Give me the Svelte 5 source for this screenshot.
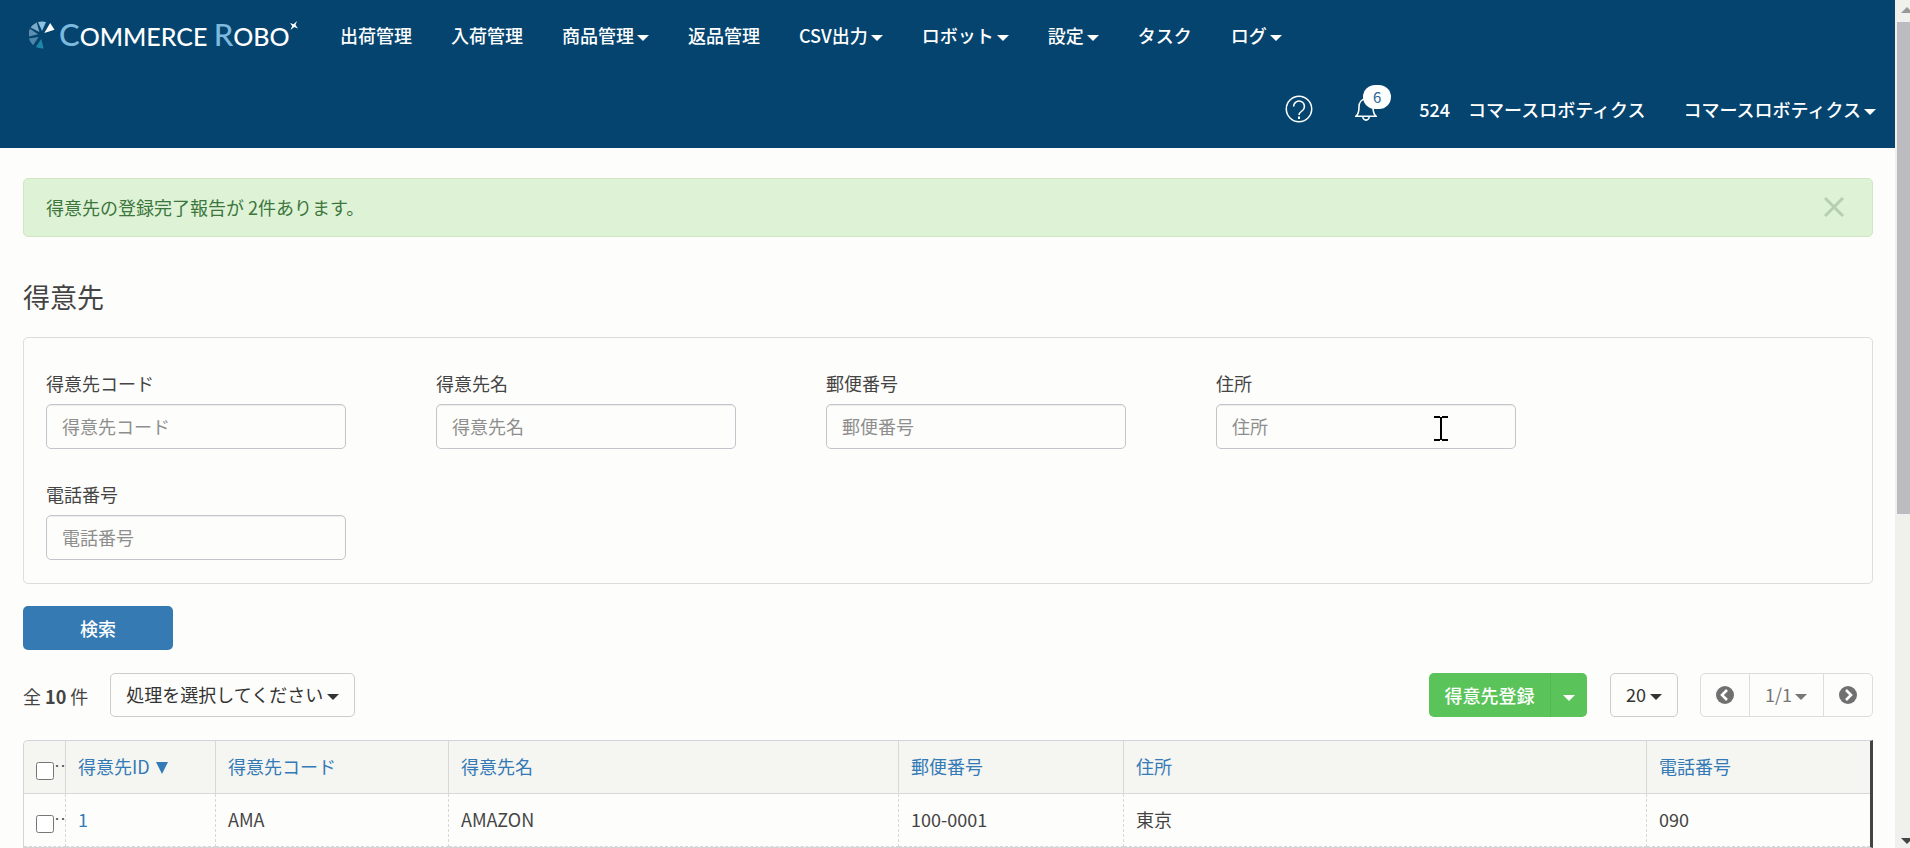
<script>
  const menu = [
    { label: '出荷管理' },
    { label: '入荷管理' },
    { label: '商品管理', caret: true },
    { label: '返品管理' },
    { label: 'CSV出力', caret: true },
    { label: 'ロボット', caret: true },
    { label: '設定', caret: true },
    { label: 'タスク' },
    { label: 'ログ', caret: true }
  ]

  const fields = [
    { id: 'code', label: '得意先コード' },
    { id: 'name', label: '得意先名' },
    { id: 'zip', label: '郵便番号' },
    { id: 'address', label: '住所', cursor: true },
    { id: 'tel', label: '電話番号' }
  ]

  const columns = ['得意先コード', '得意先名', '郵便番号', '住所', '電話番号']
  const rows = [
    { id: 1, code: 'AMA', name: 'AMAZON', zip: '100-0001', address: '東京', tel: '090' }
  ]

  const wedges = [
    { angle: 0, color: '#8fc1e0' },
    { angle: -40, color: '#7ba9c9' },
    { angle: -80, color: '#5f8fb0' },
    { angle: -122, color: '#4f86a8' },
    { angle: -170, color: '#1f86a8' }
  ]

  let query = $state({ code: '', name: '', zip: '', address: '', tel: '' })
  let checked = $state([])
  let showAlert = $state(true)

  function toggleAll (event) {
    checked = event.target.checked ? rows.map(row => row.id) : []
  }
</script>

<div class="page">
  <header>
    <div class="bar">
      <a class="brand" href="#top" aria-label="Commerce Robo">
        <svg class="mark" width="26" height="28" viewBox="0 0 26 28" aria-hidden="true">
          {#each wedges as wedge}
            <path d="M-4 -13 Q0 -14 4 -13 L0 -4 Z" fill={wedge.color} transform="translate(13 14) rotate({wedge.angle})" />
          {/each}
          <path d="M-4 -14 L4 -13 L0 -3 Z" fill="#fff" transform="translate(13 14) rotate(50)" />
        </svg>
        <span class="wordmark"><b>C</b>OMMERCE <b>R</b>OBO</span>
        <svg class="spark" width="8" height="9" viewBox="0 0 8 9" aria-hidden="true">
          <path d="M7 0 L5.5 4 L8 7.5 L4.2 6 L0.5 9 L2.2 5 L0 2 L3.6 3.2 Z" fill="#fff" />
        </svg>
      </a>
      <nav>
        {#each menu as item}
          <a href="#menu">{item.label}{#if item.caret}<i class="caret"></i>{/if}</a>
        {/each}
      </nav>
    </div>
    <div class="bar account">
      <a class="help" href="#help" aria-label="ヘルプ">
        <svg width="28" height="28" viewBox="0 0 28 28" fill="none" stroke="#fff" stroke-width="1.5">
          <circle cx="14" cy="14" r="12.7" />
          <path d="M8.6 11.4a5.4 5.4 0 1 1 8.4 4.5c-1.9 1.3-3 2-3 4" />
          <path d="M14 21.6v2.4" stroke-width="2" />
        </svg>
      </a>
      <button class="bell" aria-label="お知らせ">
        <svg width="22" height="24" viewBox="0 0 22 24" fill="none" stroke="#fff" stroke-width="1.6">
          <path d="M1 19.2c2.6-2 3-4.5 3-9.2C4 5.2 6.8 2 11 2s7 3.2 7 8c0 4.700.4 7.200 3 9.200Z" />
          <path d="M7.8 19.5a3.2 3.6 0 0 0 6.4 0" />
        </svg>
        <span class="badge">6</span>
      </button>
      <span class="company"><span>524</span><span>コマースロボティクス</span></span>
      <a href="#user">コマースロボティクス<i class="caret"></i></a>
    </div>
  </header>

  <main>
    {#if showAlert}
      <div class="alert" role="alert">
        <span>得意先の登録完了報告が 2件あります。</span>
        <button aria-label="閉じる" onclick={() => showAlert = false}>
          <svg width="20" height="20" viewBox="0 0 20 20" stroke="#b6cfb0" stroke-width="3">
            <path d="M1 1 19 19M19 1 1 19" />
          </svg>
        </button>
      </div>
    {/if}

    <h1>得意先</h1>

    <form onsubmit={event => event.preventDefault()}>
      <div class="panel">
        {#each fields as field}
          <div class="field">
            <label for={field.id}>{field.label}</label>
            <input id={field.id} type="text" placeholder={field.label} bind:value={query[field.id]}>
            {#if field.cursor}
              <svg class="ibeam" width="14" height="25" viewBox="0 0 14 25" stroke="#000" stroke-width="2" fill="none">
                <path d="M0 1h6M8 1h6M0 24h6M8 24h6M7 1v23" />
              </svg>
            {/if}
          </div>
        {/each}
      </div>
      <button class="search">検索</button>
    </form>

    <div class="toolbar">
      <span class="total">全 <strong>10</strong> 件</span>
      <span class="picker action">
        <select aria-label="処理">
          <option>処理を選択してください</option>
        </select>
        <i class="caret"></i>
      </span>
      <div class="split">
        <button>得意先登録</button>
        <button class="more" aria-label="その他"><i class="caret"></i></button>
      </div>
      <span class="picker size">
        <select aria-label="表示件数">
          <option>20</option>
        </select>
        <i class="caret"></i>
      </span>
      <div class="pager">
        <button aria-label="前へ">
          <svg width="18" height="18" viewBox="0 0 18 18"><circle cx="9" cy="9" r="9" fill="#707070" /><path d="M11 4 6 9l5 5" fill="none" stroke="#fff" stroke-width="2.6" /></svg>
        </button>
        <span class="picker number">
          <select aria-label="ページ">
            <option>1/1</option>
          </select>
          <i class="caret"></i>
        </span>
        <button aria-label="次へ">
          <svg width="18" height="18" viewBox="0 0 18 18"><circle cx="9" cy="9" r="9" fill="#707070" /><path d="M7 4l5 5-5 5" fill="none" stroke="#fff" stroke-width="2.6" /></svg>
        </button>
      </div>
    </div>

    <div class="list">
      <table>
        <colgroup>
          <col class="c-check"><col class="c-id"><col class="c-code"><col class="c-name"><col class="c-zip"><col><col class="c-tel">
        </colgroup>
        <thead>
          <tr>
            <th class="check"><div><input type="checkbox" aria-label="すべて選択" onchange={toggleAll}><span>‥</span></div></th>
            <th><a href="#sort">得意先ID<i class="sort"></i></a></th>
            {#each columns as column}
              <th><a href="#sort">{column}</a></th>
            {/each}
          </tr>
        </thead>
        <tbody>
          {#each rows as row}
            <tr>
              <td class="check"><div><input type="checkbox" aria-label="選択 {row.id}" value={row.id} bind:group={checked}><span>‥</span></div></td>
              <td><a href="#detail">{row.id}</a></td>
              <td>{row.code}</td>
              <td>{row.name}</td>
              <td>{row.zip}</td>
              <td>{row.address}</td>
              <td>{row.tel}</td>
            </tr>
          {/each}
        </tbody>
      </table>
    </div>
  </main>
</div>

<div class="scrollbar" aria-hidden="true">
  <svg width="15" height="22" viewBox="0 0 15 22"><path d="M6 13 L12 7 L18 13Z" fill="#999" /></svg>
  <div class="track"><div class="thumb"></div></div>
  <svg width="15" height="20" viewBox="0 0 15 20"><path d="M6 10 L12 16 L18 10Z" fill="#444" /></svg>
</div>

<style>
  :global(body) {
    background: #fdfdfb;
    overflow: hidden;
  }

  .page {
    height: 100vh;
    margin-right: 15px;
    overflow: hidden;
    color: #444;
    font-family: "Noto Sans CJK JP", "Noto Sans", sans-serif;
    font-size: 18px;
    line-height: 26px;
  }

  a {
    color: #337ab7;
    text-decoration: none;
  }

  button, input, select {
    box-sizing: border-box;
    margin: 0;
    font: inherit;
  }

  button {
    padding: 0;
    border: 0;
    background: none;
    cursor: pointer;
  }

  svg {
    display: block;
  }

  .caret {
    display: inline-block;
    margin-left: 3px;
    border: 6px solid transparent;
    border-top-color: currentColor;
    border-bottom: 0;
    vertical-align: middle;
  }

  /* header */
  header {
    background: #04446f;
    color: #fff;
    font-weight: 500;
  }

  header a {
    color: #fff;
  }

  .bar {
    display: flex;
    align-items: center;
    height: 74px;
    padding: 0 19px 4px 29px;
    box-sizing: border-box;
  }

  .brand {
    display: flex;
    align-items: center;
    width: 311px;
  }

  .mark {
    margin-right: 4px;
  }

  .wordmark {
    font-family: Lato, sans-serif;
    font-size: 25px;
    font-weight: 500;
    white-space: nowrap;
  }

  .wordmark b {
    color: #7db8dd;
    font-size: 31px;
    font-weight: 500;
  }

  .spark {
    align-self: flex-start;
  }

  nav {
    display: flex;
    gap: 39px;
    white-space: nowrap;
  }

  .account {
    justify-content: flex-end;
  }

  .help {
    margin-right: 42px;
  }

  .bell {
    position: relative;
    margin-right: 42px;
  }

  .badge {
    position: absolute;
    left: 8px;
    top: -12px;
    width: 28px;
    border-radius: 12px;
    background: #fff;
    color: #2a6590;
    font-size: 15px;
    font-weight: 400;
    line-height: 24px;
  }

  .company {
    display: flex;
    gap: 18px;
    margin-right: 38px;
  }

  /* content */
  main {
    padding: 30px 22px 0 23px;
  }

  .alert {
    display: flex;
    align-items: center;
    justify-content: space-between;
    padding: 15px 28px 16px 22px;
    border: 1px solid #d0e6c4;
    border-radius: 5px;
    background: #def2d6;
    color: #3c763d;
  }

  h1 {
    margin: 42px 0 22px;
    font-size: 27px;
    font-weight: 400;
    line-height: 36px;
  }

  .panel {
    display: grid;
    grid-template-columns: repeat(auto-fill, 300px);
    gap: 32px 90px;
    padding: 32px 22px 23px;
    border: 1px solid #ddd;
    border-radius: 5px;
  }

  .field {
    position: relative;
    display: grid;
    gap: 8px;
  }

  .field input {
    width: 100%;
    height: 45px;
    padding: 0 15px 2px;
    border: 1px solid #c4c4cc;
    border-radius: 5px;
    background: #fdfdfb;
    box-shadow: inset 0 1px 1px rgba(0, 0, 0, 0.07);
    color: #555;
  }

  .field input::placeholder {
    color: #8e8e8e;
    opacity: 1;
  }

  .ibeam {
    position: absolute;
    left: 218px;
    bottom: 8px;
    pointer-events: none;
  }

  .search {
    width: 150px;
    height: 44px;
    margin: 22px 0 23px;
    border-radius: 5px;
    background: #357ab2;
    color: #fff;
    font-weight: 500;
  }

  .toolbar {
    display: flex;
    height: 44px;
    margin-bottom: 23px;
  }

  .total {
    margin-right: 22px;
    line-height: 46px;
  }

  .picker {
    display: grid;
    align-items: center;
    color: #333;
  }

  .picker select, .picker .caret {
    grid-area: 1 / 1;
  }

  .picker select {
    width: 100%;
    height: 44px;
    padding: 0 15px 2px;
    border: 1px solid #ccc;
    border-radius: 5px;
    background: transparent;
    color: inherit;
    appearance: none;
  }

  .picker .caret {
    justify-self: end;
    margin: 4px 16px 0 0;
    pointer-events: none;
  }

  .action {
    width: 245px;
    margin-right: auto;
  }

  .split {
    display: flex;
    border-radius: 5px;
    background: #5ac45a;
  }

  .split button {
    width: 121px;
    color: #fff;
    font-weight: 500;
  }

  .split .more {
    width: 37px;
    border-left: 1px solid #54b954;
  }

  .split .caret {
    margin-left: 0;
  }

  .size {
    width: 68px;
    margin: 0 22px 0 23px;
  }

  .pager {
    display: flex;
    box-sizing: border-box;
    border: 1px solid #ddd;
    border-radius: 5px;
  }

  .pager button {
    display: grid;
    place-items: center;
    width: 48px;
  }

  .number {
    width: 75px;
    border: solid #ddd;
    border-width: 0 1px;
    box-sizing: border-box;
    color: #777;
  }

  .number select {
    height: 42px;
    border: 0;
  }

  /* list */
  .list {
    border: 1px solid #d4d4d8;
    border-right: 3px solid #444;
    border-radius: 5px 0 0 0;
    overflow: hidden;
  }

  table {
    width: 100%;
    table-layout: fixed;
    border-collapse: separate;
    border-spacing: 0;
  }

  .c-check { width: 42px; }
  .c-id { width: 150px; }
  .c-code { width: 233px; }
  .c-name { width: 450px; }
  .c-zip { width: 225px; }
  .c-tel { width: 223px; }

  th, td {
    height: 53px;
    box-sizing: border-box;
    padding: 0 12px 2px;
    border: dashed #d8d8d8;
    border-width: 0 1px 1px 0;
    font-weight: 400;
    text-align: left;
  }

  th {
    border-style: solid;
    background: #f5f5f1;
  }

  th:last-child, td:last-child {
    border-right: 0;
  }

  .check {
    padding-right: 0;
  }

  .check div {
    display: flex;
    align-items: center;
  }

  .check input {
    flex: none;
    width: 18px;
    height: 18px;
    margin-top: 10px;
  }

  .check span {
    font-size: 12px;
    font-weight: 700;
  }

  .sort {
    display: inline-block;
    margin-left: 6px;
    border: 6px solid transparent;
    border-top: 12px solid currentColor;
    border-bottom: 0;
  }

  /* window scrollbar */
  .scrollbar {
    position: fixed;
    inset: 0 0 0 auto;
    display: flex;
    flex-direction: column;
    width: 15px;
    background: #f0f0ec;
  }

  .track {
    flex: 1;
  }

  .thumb {
    width: 13px;
    height: 61%;
    margin-left: 2px;
    background: #bcbcc0;
  }
</style>
